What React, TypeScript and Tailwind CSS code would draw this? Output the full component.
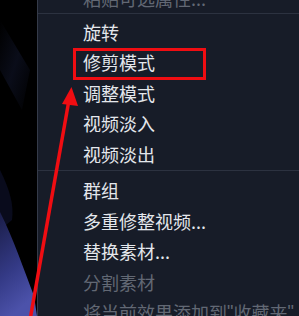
import React from "react";

const font = { fontFamily: '"Microsoft YaHei", "Noto Sans CJK SC", "Noto Sans", sans-serif' };

function Row({ label, disabled }: { label: React.ReactNode; disabled?: boolean }) {
  return (
    <div
      className={`h-[30.5px] shrink-0 flex items-center pl-[45px] text-[18px] leading-none whitespace-nowrap ${
        disabled ? "text-[#626874]" : "text-[#e4e7ec]"
      }`}
    >
      {label}
    </div>
  );
}

function Sep() {
  return <div className="h-px shrink-0 bg-[#2c3240]" />;
}

const q = { fontFamily: '"Liberation Sans", Arial, sans-serif' };

export default function App() {
  return (
    <div className="relative w-[299px] h-[316px] overflow-hidden flex bg-black" style={font}>
      <div className="w-[37px] h-full shrink-0 relative">
        <svg width="37" height="316" className="absolute inset-0">
          <defs>
            <linearGradient id="g1" x1="0" y1="0" x2="1" y2="1">
              <stop offset="0" stopColor="#000" />
              <stop offset="0.5" stopColor="#0b0e1c" />
              <stop offset="1" stopColor="#000" />
            </linearGradient>
            <linearGradient id="g2" x1="0" y1="0" x2="0.3" y2="1">
              <stop offset="0" stopColor="#1a1d48" />
              <stop offset="0.6" stopColor="#343a86" />
              <stop offset="1" stopColor="#4c52aa" />
            </linearGradient>
          </defs>
          <rect width="37" height="316" fill="#000" />
          <path d="M0 20 L30 70 L22 110 L0 70 Z" fill="url(#g1)" opacity="0.9" />
          <path d="M0 170 C10 190 14 205 12 220 L0 230 Z" fill="#090b1c" />
          <path d="M0 212 C14 240 24 270 34 296 L37 316 L0 316 Z" fill="url(#g2)" />
        </svg>
      </div>
      <div className="flex-1 h-full border-l border-[#353b49] bg-[#171c28] flex flex-col">
        <div className="mt-[-17.5px] shrink-0">
          <Row label="粘贴可选属性..." disabled />
        </div>
        <Sep />
        <div className="h-[2.5px] shrink-0" />
        <Row label="旋转" />
        <Row label="修剪模式" />
        <Row label="调整模式" />
        <Row label="视频淡入" />
        <Row label="视频淡出" />
        <div className="h-[1px] shrink-0" />
        <Sep />
        <div className="h-[4px] shrink-0" />
        <Row label="群组" />
        <Row label="多重修整视频..." />
        <Row label="替换素材..." />
        <Row label="分割素材" disabled />
        <Row
          label={
            <>
              将当前效果添加到<span style={q}>"</span>收藏夹<span style={q}>"</span>
            </>
          }
          disabled
        />
      </div>
      <svg width="299" height="316" className="absolute inset-0 pointer-events-none">
        <rect x="74.5" y="49.5" width="130" height="29" fill="none" stroke="#f00d12" strokeWidth="3" />
        <line x1="30" y1="320" x2="69" y2="100" stroke="#f00d12" strokeWidth="3.5" />
        <polygon points="71.5,87 62,104 78,106" fill="#f00d12" />
      </svg>
    </div>
  );
}
